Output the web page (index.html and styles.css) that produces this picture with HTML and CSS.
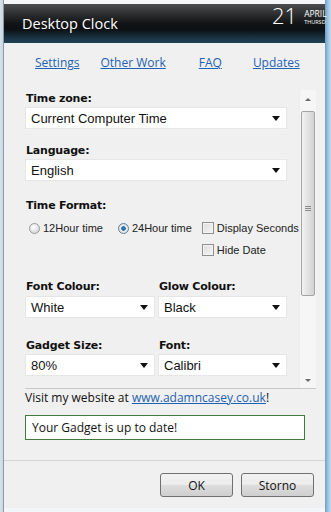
FILE: index.html
```html
<!DOCTYPE html>
<html>
<head>
    <title>Desktop Clock</title>
    <link rel="stylesheet" href="styles.css">
</head>
<body>
    <div class="window">
        <div class="header">
            <span class="title">Desktop Clock</span>
            <div class="date">
                <span class="day">21</span>
                <div class="month">
                    <span class="month-name">APRIL</span>
                    <span class="weekday">THURSD</span>
                </div>
            </div>
        </div>

        <div class="content">
            <div class="nav">
                <a href="#">Settings</a>
                <a href="#">Other Work</a>
                <a href="#">FAQ</a>
                <a href="#">Updates</a>
            </div>

            <div class="scroll-area">
                <div class="form">
                    <div class="label first">Time zone:</div>
                    <div class="select">Current Computer Time<span class="arrow"></span></div>

                    <div class="label lang">Language:</div>
                    <div class="select">English<span class="arrow"></span></div>

                    <div class="label fmt">Time Format:</div>
                    <div class="options">
                        <label class="opt"><span class="radio"></span>12Hour time</label>
                        <label class="opt"><span class="radio on"></span>24Hour time</label>
                        <div class="checks">
                            <label class="opt"><span class="check"></span>Display Seconds</label>
                            <label class="opt second"><span class="check"></span>Hide Date</label>
                        </div>
                    </div>

                    <div class="pair colours">
                        <div class="col">
                            <div class="label">Font Colour:</div>
                            <div class="select small">White<span class="arrow"></span></div>
                        </div>
                        <div class="col">
                            <div class="label">Glow Colour:</div>
                            <div class="select small">Black<span class="arrow"></span></div>
                        </div>
                    </div>

                    <div class="pair sizes">
                        <div class="col">
                            <div class="label">Gadget Size:</div>
                            <div class="select small">80%<span class="arrow"></span></div>
                        </div>
                        <div class="col">
                            <div class="label">Font:</div>
                            <div class="select small">Calibri<span class="arrow"></span></div>
                        </div>
                    </div>
                </div>

                <div class="scrollbar">
                    <span class="sb-up"></span>
                    <div class="sb-thumb"><span class="grip"></span></div>
                    <span class="sb-down"></span>
                </div>
            </div>

            <p class="visit">Visit my website at <a href="#">www.adamncasey.co.uk</a>!</p>
            <div class="status">Your Gadget is up to date!</div>

            <div class="footer">
                <button type="button" class="btn">OK</button>
                <button type="button" class="btn">Storno</button>
            </div>
        </div>
    </div>
</body>
</html>
```

FILE: styles.css
```css
body {
    margin: 0;
    background: #f4f6f8;
    font-family: "DejaVu Sans", Verdana, sans-serif;
}

.window {
    width: 331px;
    height: 512px;
    box-sizing: border-box;
    padding: 4px 6px 4px 4px;
    display: flex;
    flex-direction: column;
    background: linear-gradient(to right, #d6e2ec 0, #c9d7e3 3px, #8c9ba8 3px, #8c9ba8 4px, transparent 4px, transparent 325px, #6f9fc4 325px, #9cc4e2 328px, #c5dbee 331px);
}

.header {
    height: 39px;
    flex-shrink: 0;
    display: flex;
    justify-content: space-between;
    background: linear-gradient(to bottom, #4b4d4f 0, #2c2e30 10px, #111213 20px, #0c1216 26px, #1a3444 34px, #1f4255 39px);
    position: relative;
}

.title {
    color: #fff;
    font-family: "Open Sans", "Noto Sans", sans-serif;
    font-size: 14.5px;
    padding-left: 18px;
    padding-top: 10px;
}

/* date sits over the top edge of the window, as the gadget does */
.date {
    display: flex;
    color: #fff;
    position: absolute;
    left: 268px;
    top: -4px;
    font-family: "Open Sans", "Noto Sans", sans-serif;
}

.day {
    font-size: 22px;
    font-weight: 300;
    line-height: 30px;
}

.month {
    display: flex;
    flex-direction: column;
    margin-left: 7px;
    padding-top: 9px;
    white-space: nowrap;
}

.month-name {
    font-size: 8.5px;
    line-height: 9px;
}

.weekday {
    font-size: 5.5px;
    line-height: 8px;
}

.content {
    flex: 1;
    background: #f0f0f0;
    display: flex;
    flex-direction: column;
    font-size: 11px;
}

.nav {
    display: flex;
    padding: 11px 0 0 31px;
    height: 36px;
    box-sizing: border-box;
    font-family: "Open Sans", "Noto Sans", sans-serif;
    font-size: 12px;
}

.nav a {
    color: #1e62b4;
    margin-right: 21px;
}

.nav a:nth-child(3) {
    margin-left: 12px;
    margin-right: 31px;
}

.scroll-area {
    display: flex;
    justify-content: space-between;
    margin: 11px 9px 0 21px;
    height: 298px;
    border-bottom: 1px solid #c9c9c9;
}

.form {
    width: 262px;
    position: relative;
    z-index: 1;
}

.label {
    font-weight: bold;
    font-size: 11px;
    line-height: 15px;
    color: #111;
    padding-left: 1px;
    letter-spacing: -0.2px;
}

.first {
    margin-top: 1px;
}

.lang {
    margin-top: 14px;
}

.fmt {
    margin-top: 17px;
}

.select {
    position: relative;
    height: 22px;
    box-sizing: border-box;
    margin-top: 1px;
    background: #fff;
    border: 1px solid #e6e6e6;
    padding: 3px 0 0 5px;
    font-family: "Liberation Sans", Arial, sans-serif;
    font-size: 13px;
    color: #111;
}

.arrow {
    position: absolute;
    right: 6px;
    top: 8px;
    border-left: 4px solid transparent;
    border-right: 4px solid transparent;
    border-top: 5px solid #111;
}

.options {
    display: flex;
    margin-top: 7px;
    padding-left: 4px;
    font-family: "Liberation Sans", Arial, sans-serif;
    font-size: 11px;
    color: #222;
    white-space: nowrap;
}

.opt {
    display: flex;
    align-items: center;
    height: 16px;
    margin-right: 15px;
}

.opt:nth-child(2) {
    margin-right: 10px;
}

.checks .opt {
    margin-right: 0;
}

.second {
    margin-top: 6px;
}

.radio {
    width: 11px;
    height: 11px;
    border-radius: 50%;
    border: 1px solid #9a9a9a;
    background: radial-gradient(circle at 40% 35%, #fff 0, #e6e6e6 50%, #c9c9c9 100%);
    box-sizing: border-box;
    margin-right: 3px;
}

.radio.on {
    background: radial-gradient(circle, #2a8fd2 0, #1a5f95 30%, #e8eef2 40%, #d0d6da 100%);
    border-color: #6a7d8c;
}

.check {
    width: 12px;
    height: 12px;
    box-sizing: border-box;
    border: 1px solid #8e8f8f;
    background: linear-gradient(to bottom right, #dcdcdc, #f6f6f6);
    box-shadow: inset 0 0 0 1px #f4f4f4;
    margin-right: 3px;
}

.pair {
    display: flex;
    gap: 3px;
}

.colours {
    margin-top: 21px;
}

.sizes {
    margin-top: 20px;
}

.col {
    width: 130px;
}

.col:last-child {
    width: 129px;
}

.select.small {
    margin-top: 2px;
}

.sizes .select.small {
    margin-top: 1px;
}

.scrollbar {
    width: 17px;
    display: flex;
    flex-direction: column;
    align-items: center;
    background: #f6f6f6;
    border-left: 1px solid #ececec;
    box-sizing: border-box;
}

.sb-up {
    margin-top: 8px;
    border-left: 3px solid transparent;
    border-right: 3px solid transparent;
    border-bottom: 3px solid #6a6a6a;
}

.sb-thumb {
    margin-top: 10px;
    width: 14px;
    height: 185px;
    box-sizing: border-box;
    border: 1px solid #a4a4a4;
    border-radius: 2px;
    background: linear-gradient(to right, #f2f2f2, #e2e2e2 50%, #d2d2d2);
    display: flex;
    justify-content: center;
    padding-top: 94px;
}

.grip {
    width: 6px;
    height: 6px;
    background: repeating-linear-gradient(to bottom, #8a8a8a 0, #8a8a8a 1px, transparent 1px, transparent 2px);
}

.sb-down {
    margin-top: auto;
    margin-bottom: 6px;
    border-left: 3px solid transparent;
    border-right: 3px solid transparent;
    border-top: 3px solid #6a6a6a;
}

.visit {
    margin: 1px 0 0 21px;
    font-family: "Open Sans", "Noto Sans", sans-serif;
    font-size: 12px;
    line-height: 16px;
    color: #111;
}

.visit a {
    color: #1e62b4;
}

.status {
    margin: 9px 0 0 21px;
    width: 280px;
    height: 25px;
    box-sizing: border-box;
    border: 1px solid #3e7b3a;
    background: #fff;
    padding: 3px 0 0 6px;
    font-family: "Open Sans", "Noto Sans", sans-serif;
    font-size: 12px;
    color: #111;
}

.footer {
    margin-top: 20px;
    flex: 1;
    border-top: 1px solid #d5d5d5;
    display: flex;
    justify-content: flex-end;
    align-items: flex-start;
    gap: 8px;
    padding: 12px 11px 0 0;
}

.btn {
    width: 73px;
    height: 24px;
    border: 1px solid #707070;
    border-radius: 3px;
    background: linear-gradient(to bottom, #f2f2f2 0, #ebebeb 50%, #dddddd 51%, #cfcfcf 100%);
    font-family: "Open Sans", "Noto Sans", sans-serif;
    font-size: 12px;
    color: #111;
    padding: 0;
}
```
